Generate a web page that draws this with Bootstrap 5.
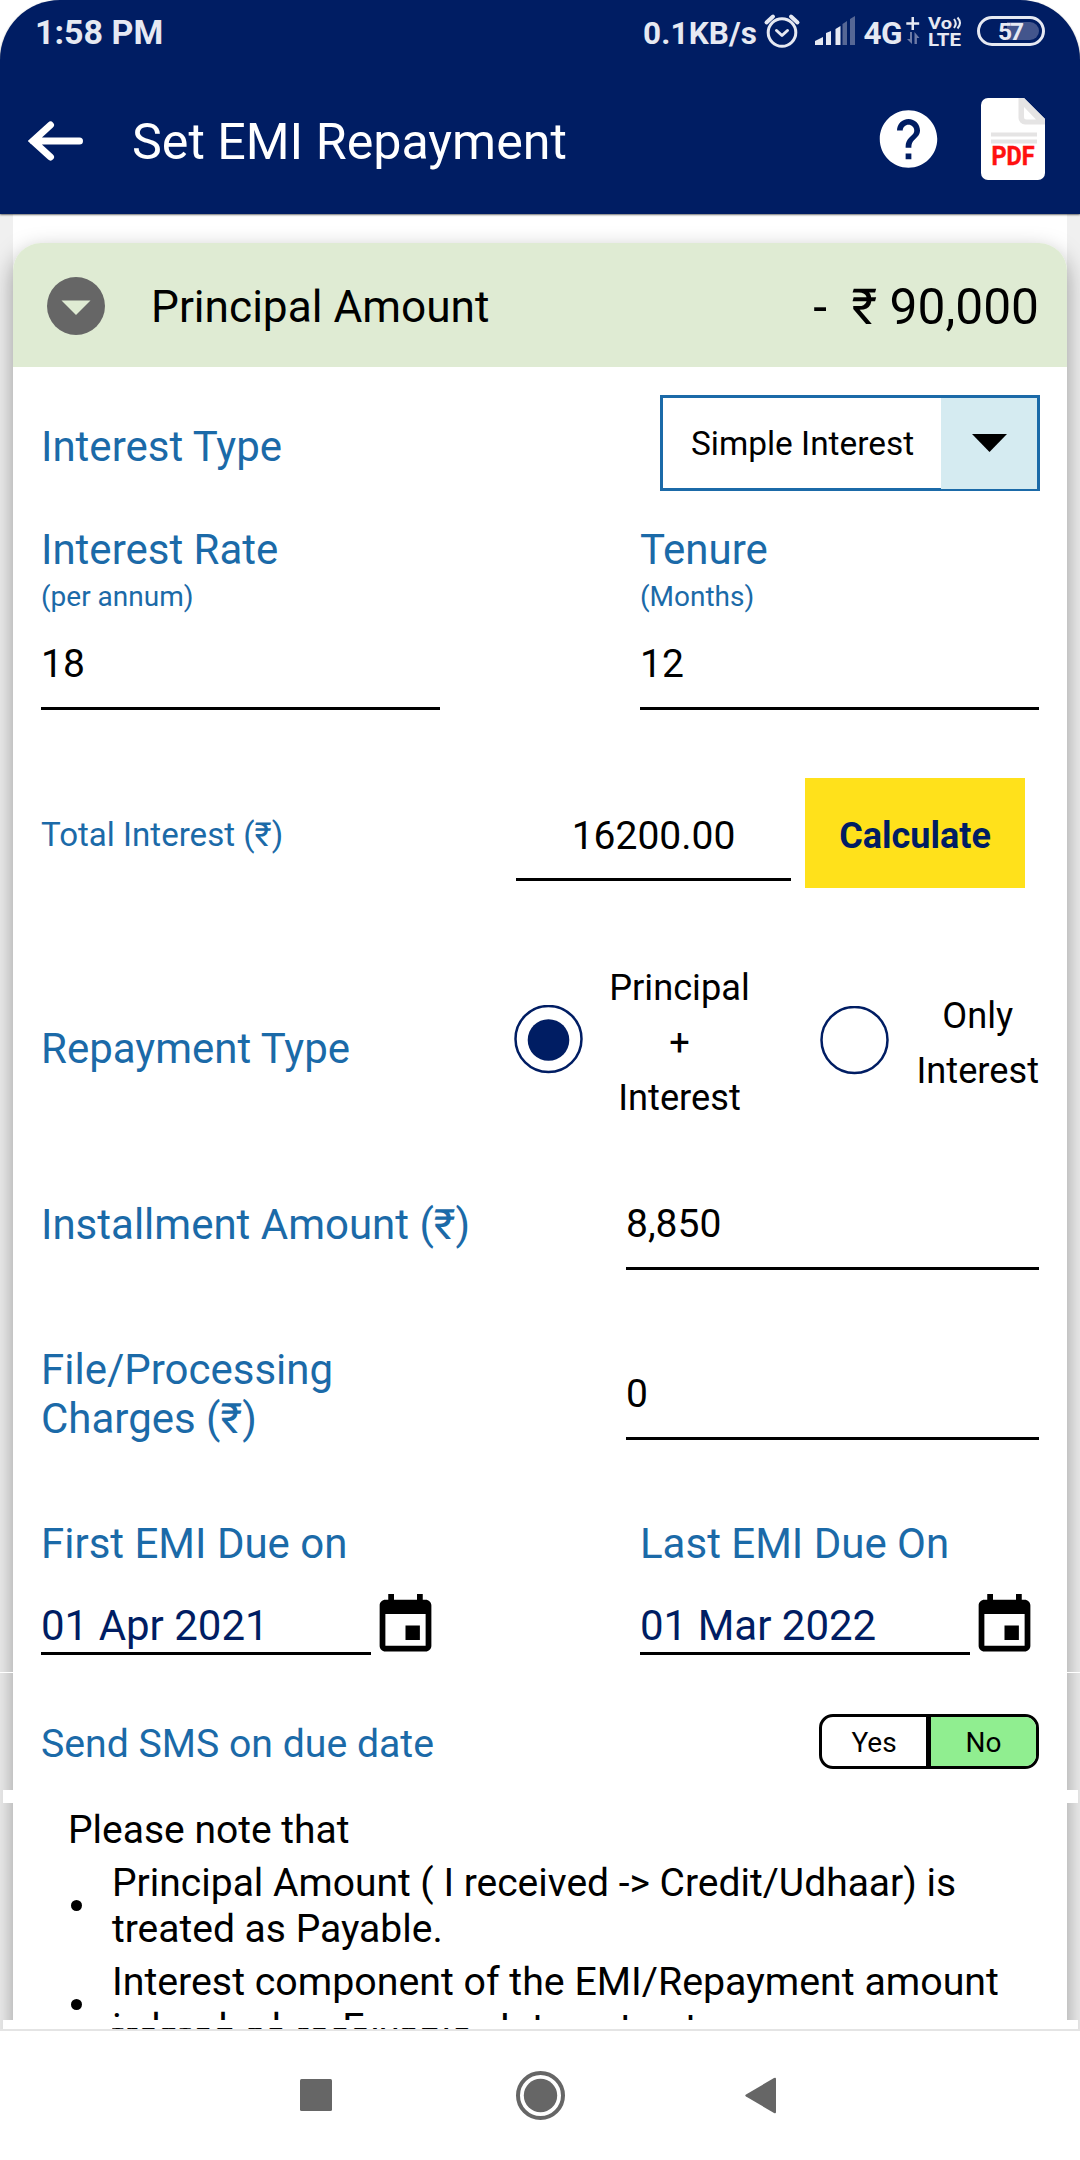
<!DOCTYPE html>
<html lang="en">
<head>
<meta charset="utf-8">
<meta name="viewport" content="width=device-width, initial-scale=1">
<title>Set EMI Repayment</title>
<link href="https://cdn.jsdelivr.net/npm/bootstrap@5.3.0/dist/css/bootstrap.min.css" rel="stylesheet">
<style>
:root{--navy:#001d63;--label:#1b6aa8}
body{font-family:Roboto,"Noto Sans",sans-serif;color:#000;background:#fff;width:1080px;height:2160px;overflow:hidden}
svg{display:block;flex:none}
svg text{font-family:Roboto,sans-serif}
.topbar{background:var(--navy);height:214px;border-radius:60px 60px 0 0;z-index:2;box-shadow:0 1px 2px rgba(0,0,0,.55)}
.statusbar{height:64px;color:#e6e9f2}
.clock{font-size:34px;font-weight:700;line-height:40px;padding:12px 0 0 35px}
.titlebar{height:150px}
.back-icon{margin:0 0 4px 28px}
.title-text{font-size:50.2px;line-height:60px;margin-left:48px;padding-top:5px}
.help-icon{margin-right:38px}
.pdf-icon{margin-right:35px}
.screen{height:1815px;background:#f0f0f0;overflow:hidden}
.sheet-bg{margin:0 13px;background:#fff;padding-top:29px;height:1815px}
.emi-card{border:0;border-radius:28px 28px 0 0;box-shadow:0 9px 23px rgba(0,0,0,.37);height:1830px;background:#fff}
.emi-card .emi-head{background:#dfebd3;height:124px;border-radius:28px 28px 0 0;border:0;padding:2px 28px 0 34px}
.head-name{font-size:44.2px;line-height:54px;margin-left:46px;padding-top:2px}
.head-amt{font-size:49.7px;line-height:60px;white-space:pre;padding-top:1px}
.emi-body{padding:28px 28px 0 28px}
.lbl{color:var(--label);font-size:42px;line-height:48px;white-space:nowrap}
.sub-lbl{color:var(--label);font-size:28px;line-height:36px;margin-top:5px}
.line-input,.line-input:focus{border:0;border-bottom:3px solid #000;border-radius:0;background:transparent;color:#000;font-size:39px;line-height:46px;height:70px;padding:1px 0 20px;box-shadow:none}
.w-half{width:399px}
.w-wide{width:413px}
.picker{width:380px;height:96px;border:3px solid var(--label);margin-right:-1px}
.picker-text{font-size:33.4px;line-height:40px;padding-left:28px;padding-top:2px}
.picker-btn{width:96px;height:91px;background:#d5ebf1;padding-top:36px}
.rate-row{margin-top:35px}
.rate-row .line-input{margin-top:25px}
.calc-row{margin-top:68px;height:110px;padding-right:14px}
.calc-row .lbl{font-size:33.1px;line-height:40px;margin-top:37px}
.calc-row .line-input{width:275px;height:69px;margin-top:34px;padding-bottom:19px}
.btn-calc,.btn-calc:hover{background:#ffe11b;color:var(--navy);width:220px;height:110px;border:0;border-radius:0;font-size:36px;font-weight:700;padding:5px 0 0;margin-left:14px}
.type-row{margin-top:71px;height:165px}
.opt-text{font-size:36.2px;line-height:55px;text-align:center;padding-top:1px}
.date-row{margin-top:23px}
.date-box{width:330px;height:54px;border-bottom:3px solid #000;color:var(--navy);font-size:42px;line-height:48px;padding-top:1px;margin-top:10px}
.toggle{width:220px;height:55px;border:3px solid #000;border-radius:14px;overflow:hidden;font-size:28px;text-align:center;line-height:52px}
.toggle-no{background:#90ee90;border-left:5px solid #000}
.notes{font-size:39px;line-height:46px;margin:38px 0 0 27px}
.notes ul{margin:0;padding:0;list-style:none}
.notes li{margin-top:7px;height:92px}
.notes li:last-child{font-size:39.3px}
.dot{width:11px;height:11px;border-radius:50%;background:#000;margin:0 30px 2px 3px;flex:none}
.side-line{top:1458px;width:13px;height:1px}
.seam{left:3px;right:2px;background:#fff}
.seam-a{top:1576px;height:13px;clip-path:polygon(0 0,10px 0,10px 100%,0 100%,0 0,100% 0,100% 100%,1064px 100%,1064px 0,0 0)}
.seam-b{top:1806px;height:9px;padding:8px 0 0 109px}
.cut-line{height:1px;overflow:hidden;font-size:39px;line-height:46px}
.cut-line span{display:block;margin-top:-17px}
.sysnav{height:131px;border-top:2px solid #e4e4e4;background:#fff}
</style>
</head>
<body>
<header class="topbar position-relative">
  <div class="statusbar d-flex justify-content-between">
    <span class="clock">1:58 PM</span>
    <svg width="440" height="64" viewBox="640 0 440 64" fill="#e6e9f2">
      <text x="643" y="43.500" font-size="31.500" font-weight="700" textLength="114">0.1KB/s</text>
      <g fill="none" stroke="#e6e9f2" stroke-width="3" stroke-linecap="round" stroke-linejoin="round">
        <circle cx="782" cy="32.500" r="13.800"/><path d="M776.500 30.500L782 35.500L787.500 30.500"/><path d="M766.500 22.500L773 16.500M797.500 22.500L791 16.500" stroke-width="4"/>
      </g>
      <path d="M815 45v-4l8-4v8zM826 45V33l5-2v14zM835.500 45V29l5-3v19z"/>
      <path d="M842.500 45V24l4.500-3v24zM850 45V19l5-3v29z" fill="#566795"/>
      <text x="863.500" y="43.500" font-size="31.500" font-weight="700" textLength="39">4G</text>
      <path d="M911.500 17h2.500v5.200h5.200v2.600H914V30h-2.500v-5.200h-5.200v-2.600h5.200z"/>
      <path d="M910 32h2v12l-5-5h3zM914.500 44V32l5 6h-2.600v6z" fill="#6d7ba6"/>
      <text x="928" y="28.500" font-size="17" font-weight="700" textLength="24" lengthAdjust="spacingAndGlyphs">Vo</text>
      <path d="M954 19q3.500 4.500 0 9M957.500 17.500q5 5.500 0 11" fill="none" stroke="#e6e9f2" stroke-width="2"/>
      <text x="928" y="45.500" font-size="18" font-weight="700" textLength="33" lengthAdjust="spacingAndGlyphs">LTE</text>
      <path d="M1007 22h23a9 9 0 0 1 0 18h-23z" fill="#43558c"/>
      <rect x="978.500" y="17.500" width="65" height="27" rx="13.500" fill="none" stroke="#e6e9f2" stroke-width="3"/>
      <text x="998" y="40" font-size="24.500" font-weight="700" textLength="26">57</text>
    </svg>
  </div>
  <div class="titlebar d-flex align-items-center text-white">
    <svg class="back-icon" width="56" height="52" viewBox="0 -4 56 52"><path d="M5 26H51.500M22.500 10L5 26L22.500 42" fill="none" stroke="#fff" stroke-width="7" stroke-linecap="round"/></svg>
    <h1 class="title-text fw-normal mb-0">Set EMI Repayment</h1>
    <svg class="help-icon ms-auto" width="69" height="70" viewBox="0 0 24 24"><path fill="#fff" d="M12 2C6.480 2 2 6.480 2 12s4.480 10 10 10 10-4.480 10-10S17.520 2 12 2zm1 17h-2v-2h2v2zm2.070-7.750l-.9.920C13.450 12.900 13 13.500 13 15h-2v-.5c0-1.100.45-2.100 1.170-2.830l1.240-1.260c.37-.36.59-.86.59-1.410 0-1.100-.9-2-2-2s-2 .9-2 2H8c0-2.210 1.790-4 4-4s4 1.790 4 4c0 .88-.36 1.680-.93 2.250z"/></svg>
    <svg class="pdf-icon" width="64" height="82" viewBox="0 0 64 82">
      <path d="M7 0H43L64 21V75a7 7 0 0 1-7 7H7a7 7 0 0 1-7-7V7a7 7 0 0 1 7-7z" fill="#fff"/>
      <path d="M37.500 0H43L64 21V26.500H44a6.500 6.500 0 0 1-6.500-6.500z" fill="#e5e4e4"/><path d="M43 9L55 21.500H45.500a2.500 2.500 0 0 1-2.500-2.500z" fill="#fff"/>
      <path d="M10 34.500h46v4H10zM10 41.500h46v4H10z" fill="#e5e4e4"/>
      <text x="10.500" y="67" font-size="25" font-weight="700" fill="#ff1010" stroke="#ff1010" stroke-width=".5" textLength="43" lengthAdjust="spacingAndGlyphs">PDF</text>
    </svg>
  </div>
</header>

<main class="screen position-relative">
  <div class="sheet-bg">
    <section class="card emi-card">
      <div class="card-header emi-head d-flex align-items-center">
        <svg width="58" height="58" viewBox="0 0 58 58"><circle cx="29" cy="29" r="29" fill="#666"/><path d="M14.500 23.500h29L29 38z" fill="#dfebd3"/></svg>
        <span class="head-name">Principal Amount</span>
        <span class="head-amt ms-auto">-  ₹ 90,000</span>
      </div>
      <div class="card-body emi-body">
        <div class="d-flex justify-content-between align-items-center">
          <label class="lbl pt-2">Interest Type</label>
          <div class="picker d-flex justify-content-between align-items-center">
            <span class="picker-text">Simple Interest</span>
            <span class="picker-btn align-self-start d-flex justify-content-center align-items-start"><svg width="35" height="18" viewBox="0 0 35 18"><path d="M0 0h35L17.500 18z"/></svg></span>
          </div>
        </div>

        <div class="rate-row d-flex justify-content-between">
          <div class="w-half">
            <label class="lbl d-block">Interest Rate</label>
            <div class="sub-lbl">(per annum)</div>
            <input class="form-control line-input" value="18">
          </div>
          <div class="w-half">
            <label class="lbl d-block">Tenure</label>
            <div class="sub-lbl">(Months)</div>
            <input class="form-control line-input" value="12">
          </div>
        </div>

        <div class="calc-row d-flex align-items-start">
          <label class="lbl">Total Interest (₹)</label>
          <input class="form-control line-input text-center ms-auto" value="16200.00">
          <button class="btn btn-calc">Calculate</button>
        </div>

        <div class="type-row d-flex align-items-start">
          <label class="lbl" style="margin-top:66px;width:473px">Repayment Type</label>
          <svg width="69" height="69" viewBox="0 0 69 69" style="margin-top:46px"><circle cx="34.500" cy="34" r="33" fill="#fff" stroke="#001d63" stroke-width="2.500"/><circle cx="34.500" cy="35" r="20.800" fill="#001d63"/></svg>
          <div class="opt-text" style="width:141px;margin-left:26px">Principal<br>+<br>Interest</div>
          <svg width="69" height="69" viewBox="0 0 69 69" style="margin-top:47px;margin-left:70px"><circle cx="34.500" cy="34" r="33" fill="#fff" stroke="#001d63" stroke-width="2.500"/></svg>
          <div class="opt-text ms-auto" style="margin-top:28px">Only<br>Interest</div>
        </div>

        <div class="d-flex justify-content-between align-items-start" style="margin-top:76px;height:70px">
          <label class="lbl" style="padding-top:1px">Installment Amount (₹)</label>
          <input class="form-control line-input w-wide" value="8,850">
        </div>

        <div class="d-flex justify-content-between align-items-start" style="margin-top:75px;height:98px">
          <label class="lbl" style="line-height:49px">File/Processing<br>Charges (₹)</label>
          <input class="form-control line-input w-wide" style="margin-top:25px" value="0">
        </div>

        <div class="d-flex justify-content-between" style="margin-top:77px">
          <div class="w-half">
            <label class="lbl d-block">First EMI Due on</label>
            <div class="date-row d-flex">
              <div class="date-box">01 Apr 2021</div>
              <svg width="69" height="69" viewBox="0 0 24 24"><path d="M17 12h-5v5h5v-5zM16 1v2H8V1H6v2H5c-1.110 0-1.990.9-1.990 2L3 19c0 1.100.89 2 2 2h14c1.100 0 2-.9 2-2V5c0-1.100-.9-2-2-2h-1V1h-2zm3 18H5V8h14v11z"/></svg>
            </div>
          </div>
          <div class="w-half">
            <label class="lbl d-block">Last EMI Due On</label>
            <div class="date-row d-flex">
              <div class="date-box">01 Mar 2022</div>
              <svg width="69" height="69" viewBox="0 0 24 24"><path d="M17 12h-5v5h5v-5zM16 1v2H8V1H6v2H5c-1.110 0-1.990.9-1.990 2L3 19c0 1.100.89 2 2 2h14c1.100 0 2-.9 2-2V5c0-1.100-.9-2-2-2h-1V1h-2zm3 18H5V8h14v11z"/></svg>
            </div>
          </div>
        </div>

        <div class="d-flex justify-content-between align-items-start" style="margin-top:54px;height:55px">
          <label class="lbl" style="font-size:39.200px;margin-top:6px">Send SMS on due date</label>
          <div class="toggle d-flex"><div style="width:104px">Yes</div><div class="toggle-no flex-grow-1">No</div></div>
        </div>

        <div class="notes">
          <div>Please note that</div>
          <ul>
            <li class="d-flex align-items-center"><span class="dot"></span><span>Principal Amount ( I received -&gt; Credit/Udhaar) is<br>treated as Payable.</span></li>
            <li class="d-flex align-items-center"><span class="dot"></span><span class="text-nowrap">Interest component of the EMI/Repayment amount<br>is booked as Expense Interest entry</span></li>
          </ul>
        </div>
      </div>
    </section>
  </div>
  <div class="side-line position-absolute start-0 bg-white"></div>
  <div class="side-line position-absolute end-0 bg-white"></div>
  <div class="seam seam-a position-absolute"></div>
  <div class="seam seam-b position-absolute"><div class="cut-line"><span>treated as receivable</span></div></div>
</main>

<nav class="sysnav d-flex justify-content-center" aria-label="System">
  <svg width="1080" height="129" viewBox="0 2031 1080 129" fill="#666">
    <rect x="300" y="2079" width="32" height="32" rx="1.500"/>
    <circle cx="540.500" cy="2095.500" r="22.500" fill="none" stroke="#666" stroke-width="4"/><circle cx="540.500" cy="2095.500" r="16.700"/>
    <path d="M746 2094.500L774 2078q2-1 2 1V2112q0 2-2 1L746 2096.500q-1.500-1 0-2z"/>
  </svg>
</nav>
<script src="https://cdn.jsdelivr.net/npm/bootstrap@5.3.0/dist/js/bootstrap.bundle.min.js"></script>
</body>
</html>
